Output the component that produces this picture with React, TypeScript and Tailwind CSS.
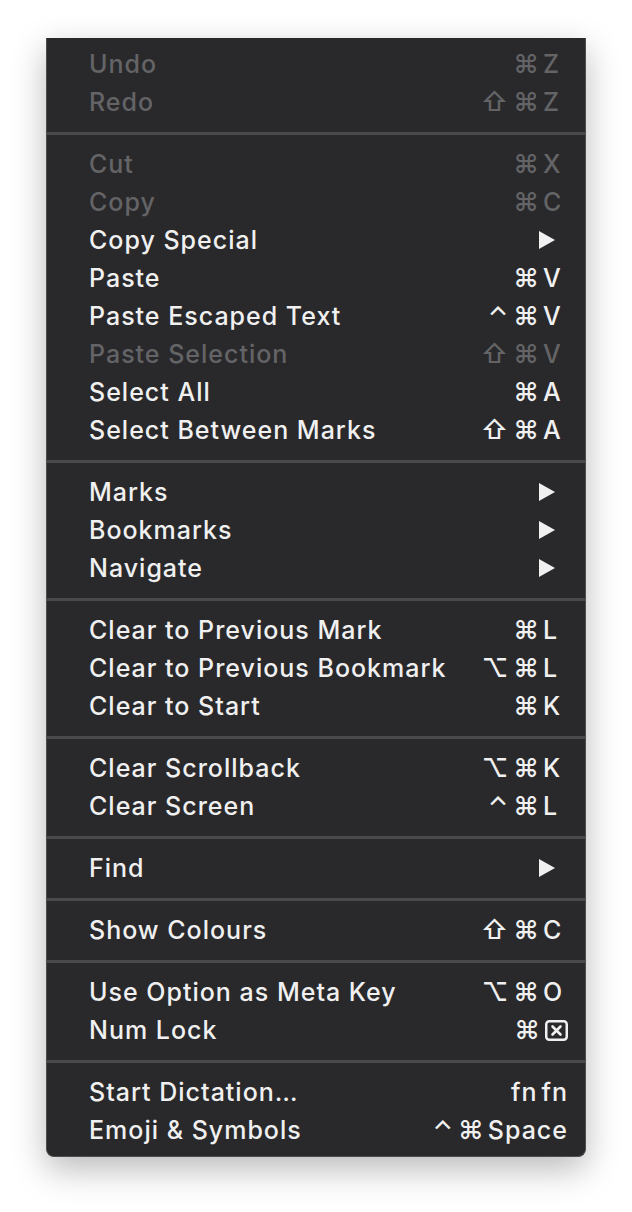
type Item = {
  label: string;
  disabled?: boolean;
  mods?: string[];
  keyText?: string;
  submenu?: boolean;
  numLock?: boolean;
};

const sections: Item[][] = [
  [
    { label: "Undo", disabled: true, mods: ["⌘"], keyText: "Z" },
    { label: "Redo", disabled: true, mods: ["⇧", "⌘"], keyText: "Z" },
  ],
  [
    { label: "Cut", disabled: true, mods: ["⌘"], keyText: "X" },
    { label: "Copy", disabled: true, mods: ["⌘"], keyText: "C" },
    { label: "Copy Special", submenu: true },
    { label: "Paste", mods: ["⌘"], keyText: "V" },
    { label: "Paste Escaped Text", mods: ["⌃", "⌘"], keyText: "V" },
    { label: "Paste Selection", disabled: true, mods: ["⇧", "⌘"], keyText: "V" },
    { label: "Select All", mods: ["⌘"], keyText: "A" },
    { label: "Select Between Marks", mods: ["⇧", "⌘"], keyText: "A" },
  ],
  [
    { label: "Marks", submenu: true },
    { label: "Bookmarks", submenu: true },
    { label: "Navigate", submenu: true },
  ],
  [
    { label: "Clear to Previous Mark", mods: ["⌘"], keyText: "L" },
    { label: "Clear to Previous Bookmark", mods: ["⌥", "⌘"], keyText: "L" },
    { label: "Clear to Start", mods: ["⌘"], keyText: "K" },
  ],
  [
    { label: "Clear Scrollback", mods: ["⌥", "⌘"], keyText: "K" },
    { label: "Clear Screen", mods: ["⌃", "⌘"], keyText: "L" },
  ],
  [{ label: "Find", submenu: true }],
  [{ label: "Show Colours", mods: ["⇧", "⌘"], keyText: "C" }],
  [
    { label: "Use Option as Meta Key", mods: ["⌥", "⌘"], keyText: "O" },
    { label: "Num Lock", mods: ["⌘"], numLock: true },
  ],
  [
    { label: "Start Dictation…", mods: ["fn"], keyText: "fn" },
    { label: "Emoji & Symbols", mods: ["⌃", "⌘"], keyText: "Space" },
  ],
];

const Arrow = () => (
  <svg width="18" height="18" viewBox="0 0 18 18" className="mr-[12px]">
    <path d="M1 0 L17 9 L1 18 Z" fill="currentColor" />
  </svg>
);

const ClearKey = () => (
  <svg width="23" height="21" viewBox="0 0 23 21" className="ml-[5px]">
    <rect x="1.25" y="1.25" width="20.5" height="18.5" rx="3" fill="none" stroke="currentColor" strokeWidth="2.5" />
    <path d="M7.5 6.5 L15.5 14.5 M15.5 6.5 L7.5 14.5" stroke="currentColor" strokeWidth="2.6" strokeLinecap="round" />
  </svg>
);

const Shortcut = ({ item }: { item: Item }) => {
  if (item.submenu) return <Arrow />;
  return (
    <div className="flex items-center">
      <div className="flex items-center gap-[5px]">
        {item.mods?.map((m, i) => (
          <span key={i} className={m === "fn" ? "" : "text-[26px] font-medium tracking-normal"}>
            {m}
          </span>
        ))}
      </div>
      {item.numLock ? (
        <ClearKey />
      ) : (
        <span className="ml-[4px] min-w-[25px] text-left">{item.keyText}</span>
      )}
    </div>
  );
};

const Row = ({ item }: { item: Item }) => (
  <div
    className={`flex h-[38px] items-center justify-between pl-[42px] pr-[17px] ${
      item.disabled ? "text-[#646466]" : "text-[#f0f0f0]"
    }`}
  >
    <span>{item.label}</span>
    <Shortcut item={item} />
  </div>
);

export default function App() {
  return (
    <div className="min-h-[1212px] w-full bg-white pl-[46px] pt-[38px]">
      <div
        className="w-[540px] rounded-b-[8px] border-x border-b border-[#4e4e50] bg-[#29292c] pt-[7px] pb-[7px] text-[25px] font-[450] leading-none tracking-[0.04em] shadow-[0_12px_34px_rgba(0,0,0,0.28)]"
        style={{ fontFamily: "Inter, 'DejaVu Sans', sans-serif" }}
      >
        {sections.map((sec, si) => (
          <div key={si}>
            {si > 0 && <div className="mt-[11px] mb-[10px] h-[3px] bg-[#4a4a4c]" />}
            {sec.map((item) => (
              <Row key={item.label} item={item} />
            ))}
          </div>
        ))}
      </div>
    </div>
  );
}
